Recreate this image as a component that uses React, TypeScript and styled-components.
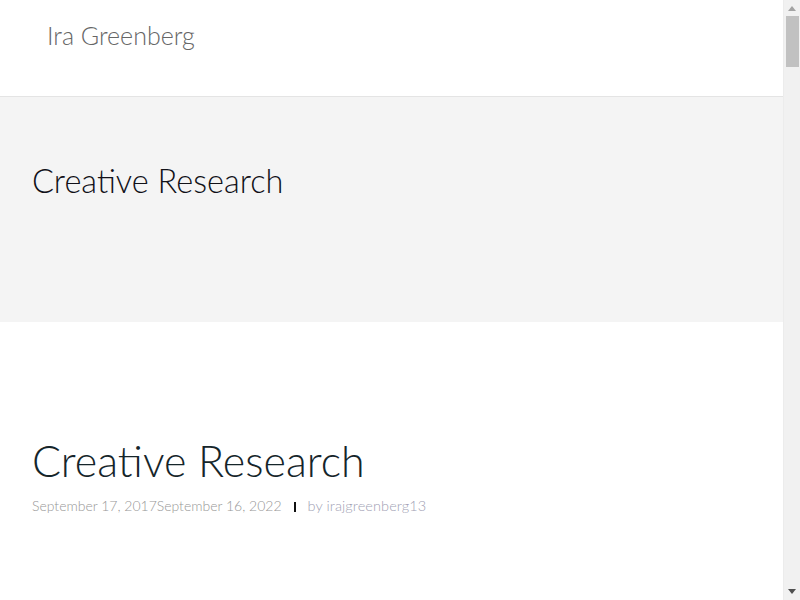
import styled, { createGlobalStyle } from 'styled-components';

const GlobalStyle = createGlobalStyle`
	html, body {
		margin: 0;
		padding: 0;
		background: #fff;
		font-family: 'Lato', 'Open Sans', sans-serif;
		font-weight: 300;
		overflow: hidden;
	}
	* {
		box-sizing: border-box;
	}
`;

const App = () => {
	return (
		<Page>
			<GlobalStyle />
			<Content>
				<Header>
					<SiteTitle>Ira Greenberg</SiteTitle>
				</Header>

				<Banner>
					<BannerTitle>Creative Research</BannerTitle>
				</Banner>

				<Main>
					<Article>
						<PostTitle>Creative Research</PostTitle>
						<Meta>
							<span>September 17, 2017September 16, 2022</span>
							<Separator />
							<Author>by irajgreenberg13</Author>
						</Meta>
					</Article>
				</Main>
			</Content>

			<ScrollRail>
				<Arrow viewBox="0 0 8 5">
					<path d="M0 5 L4 0 L8 5 Z" />
				</Arrow>
				<Thumb />
				<Arrow viewBox="0 0 8 5" $down>
					<path d="M0 0 L8 0 L4 5 Z" />
				</Arrow>
			</ScrollRail>
		</Page>
	);
};

export default App;

const Page = styled.div`
	display: grid;
	grid-template-columns: 1fr 17px;
	height: 100vh;
`;

const Content = styled.div`
	overflow: hidden;
`;

const Header = styled.header`
	height: 97px;
	padding: 18px 47px;
	border-bottom: 1px solid #e4e4e4;
`;

const SiteTitle = styled.div`
	font-size: 25px;
	line-height: 34px;
	color: #666;
	font-weight: 300;
`;

const Banner = styled.section`
	height: 225px;
	background: #f4f4f4;
	padding: 64px 32px 0;
`;

const BannerTitle = styled.h1`
	margin: 0;
	font-size: 32.5px;
	line-height: 40px;
	font-weight: 300;
	color: #111118;
`;

const Main = styled.main`
	padding: 112px 32px 0;
`;

const Article = styled.article`
	display: flex;
	flex-direction: column;
	gap: 9px;
`;

const PostTitle = styled.h2`
	margin: 0;
	font-size: 43px;
	line-height: 54px;
	font-weight: 300;
	color: #15252a;
`;

const Meta = styled.div`
	display: flex;
	align-items: center;
	font-size: 14px;
	color: #979797;
`;

const Separator = styled.span`
	display: inline-block;
	width: 2px;
	height: 10px;
	background: #111;
	margin: 2px 12px 0 12px;
`;

const Author = styled.span`
	font-size: 14.5px;
	letter-spacing: 0.1px;
	color: #a19fb4;
`;

const ScrollRail = styled.div`
	display: flex;
	flex-direction: column;
	align-items: center;
	background: #f1f1f1;
	border-left: 1px solid #ececec;
	padding: 6px 0;
`;

const Arrow = styled.svg<{ $down?: boolean }>`
	width: 8px;
	height: 5px;
	fill: ${(p) => (p.$down ? '#505050' : '#a3a3a3')};
	margin-top: ${(p) => (p.$down ? 'auto' : '0')};
`;

const Thumb = styled.div`
	width: 13px;
	height: 51px;
	margin-top: 5px;
	background: #c1c1c1;
`;
